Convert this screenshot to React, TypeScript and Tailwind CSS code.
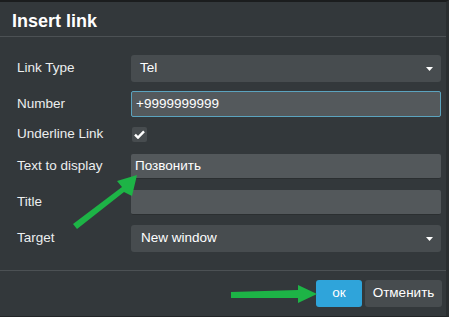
import React from "react";

const font = { fontFamily: '"Liberation Sans", Arial, sans-serif' };

function Caret() {
  return (
    <svg width="7" height="4" viewBox="0 0 7 4" className="shrink-0">
      <path d="M0 0h7L3.5 4z" fill="#ffffff" />
    </svg>
  );
}

function Row({ label, children, cls }: { label: string; children: React.ReactNode; cls: string }) {
  return (
    <div className={`flex items-center ${cls}`}>
      <div className="w-[131px] pl-[17px] text-[13.5px] text-[#eceeef]">{label}</div>
      <div className="flex-1 pr-[5px]">{children}</div>
    </div>
  );
}

export default function App() {
  return (
    <div style={font} className="relative w-[449px] h-[317px] overflow-hidden bg-[#33383b] border-t-2 border-t-[#1b1d1e] border-r-[3px] border-r-[#2a2e30] border-b-[1px] border-b-[#222527]">
      <div className="h-[34px] pl-[12px] pt-[6px] text-[18px] font-bold text-white">Insert link</div>
      <div className="h-px bg-[#4c5154]" />
      <div className="flex flex-col pt-[18px] h-[233px]">
        <Row label="Link Type" cls="h-[27px]">
          <div className="flex h-[27px] items-center justify-between rounded-[3px] bg-[#474c4f] pl-[9px] pr-[8px] text-[13.5px] text-white">
            <span>Tel</span>
            <Caret />
          </div>
        </Row>
        <Row label="Number" cls="h-[26px] mt-[9px]">
          <div className="flex h-[26px] items-center rounded-[2px] border border-[#5ba3be] bg-[#54595c] pl-[4px] text-[13.5px] text-white">
            +9999999999
          </div>
        </Row>
        <Row label="Underline Link" cls="h-[15px] mt-[10px]">
          <div className="flex h-[15px] w-[15px] ml-px items-center justify-center rounded-[2px] bg-[#474c4f]">
            <svg width="11" height="9" viewBox="0 0 11 9">
              <path d="M1 4.6 4 7.6 10 1.4" fill="none" stroke="#ffffff" strokeWidth="2.4" />
            </svg>
          </div>
        </Row>
        <Row label="Text to display" cls="h-[25px] mt-[12px]">
          <div className="flex h-[25px] items-center rounded-[2px] bg-[#53585b] border-b border-b-[#2b2f31] pl-[4px] text-[13.5px] text-white">
            Позвонить
          </div>
        </Row>
        <Row label="Title" cls="h-[25px] mt-[11px]">
          <div className="h-[25px] rounded-[2px] bg-[#53585b] border-b border-b-[#2b2f31]" />
        </Row>
        <Row label="Target" cls="h-[27px] mt-[10px]">
          <div className="flex h-[27px] items-center justify-between rounded-[3px] bg-[#474c4f] pl-[10px] pr-[8px] text-[13.5px] text-white">
            <span>New window</span>
            <Caret />
          </div>
        </Row>
      </div>
      <div className="h-px bg-[#4c5154]" />
      <div className="flex justify-end gap-[3px] pt-[9px] pr-[4px]">
        <div className="flex h-[27px] w-[46px] items-center justify-center rounded-[3px] bg-[#2fa4da] text-[13.5px] text-white">ок</div>
        <div className="flex h-[27px] w-[77px] items-center justify-center rounded-[3px] bg-[#474c4f] text-[13.5px] text-white">Отменить</div>
      </div>
      <svg className="pointer-events-none absolute left-0 top-[-2px]" width="449" height="317" viewBox="0 0 449 317">
        <path d="M73 224 L77 229 L124 192 L132 196 L137 175 L117 181 L122 187 Z" fill="#1db446" />
        <path d="M231 292 L231 298 L298 298 L298 303 L317 294 L298 285 L298 290 Z" fill="#1db446" />
      </svg>
    </div>
  );
}
